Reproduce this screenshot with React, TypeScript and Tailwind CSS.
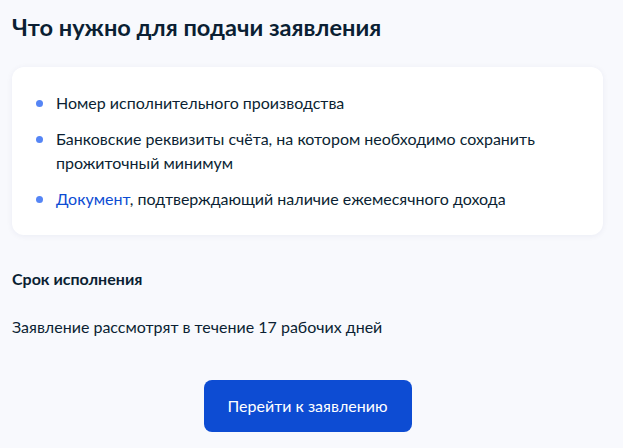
import React from 'react';

const items: React.ReactNode[] = [
  'Номер исполнительного производства',
  'Банковские реквизиты счёта, на котором необходимо сохранить прожиточный минимум',
  <>
    <a href="#" className="text-[#0d4cd3]">Документ</a>, подтверждающий наличие ежемесячного дохода
  </>,
];

export default function App() {
  return (
    <div className="min-h-[448px] bg-[#f8f9fd] pl-3 pr-5 pt-[14px] font-['Lato',sans-serif] text-[#0b1f33]">
      <h2 className="text-[23.6px] font-bold leading-[26px]">Что нужно для подачи заявления</h2>

      <div className="mt-[27px] rounded-xl bg-white px-6 py-6 shadow-[0_1px_6px_rgba(0,30,100,0.06)]">
        <ul className="flex flex-col gap-3">
          {items.map((item, i) => (
            <li key={i} className="flex text-[16px] leading-6">
              <span className="mr-[13px] mt-[9px] h-[7px] w-[7px] shrink-0 rounded-full bg-[#5585f5]" />
              <span>{item}</span>
            </li>
          ))}
        </ul>
      </div>

      <div className="mt-8 text-[16px] font-bold leading-6">Срок исполнения</div>
      <p className="mt-6 text-[16px] leading-6">Заявление рассмотрят в течение 17 рабочих дней</p>

      <div className="mt-[41px] flex justify-center">
        <button className="h-[52px] w-[208px] rounded-lg bg-[#0d4cd3] text-[16px] text-white">
          Перейти к заявлению
        </button>
      </div>
    </div>
  );
}
